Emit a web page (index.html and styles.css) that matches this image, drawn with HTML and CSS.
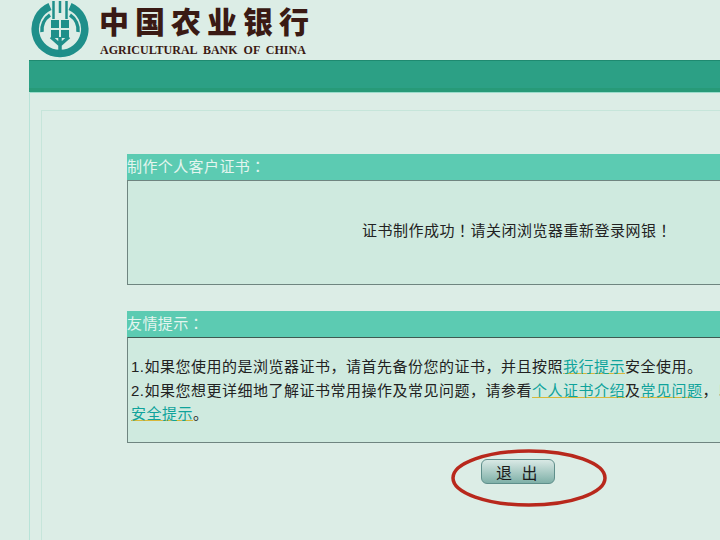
FILE: index.html
```html
<!DOCTYPE html>
<html lang="zh-CN">

<head>
    <meta charset="UTF-8">
    <meta name="viewport" content="width=device-width, initial-scale=1.0">
    <title>中国农业银行</title>
    <link rel="stylesheet" href="styles.css">
</head>

<body>
    <div class="header">
        <svg class="logo" width="58" height="58" viewBox="0 0 58 58">
            <g fill="none" stroke="#1f8f8a">
                <path stroke-width="7.5" d="M19 6.5A24.5 24.5 0 0 0 29 53.5A24.5 24.5 0 0 0 39 6.5" />
                <path stroke-width="3.5" d="M11 32A18 18 0 0 1 19 15" />
                <path stroke-width="3.5" d="M47 32A18 18 0 0 0 39 15" />
                <path stroke-width="2.5" d="M22.5 1V19M35.5 1V19M29 1V13" />
                <path stroke-width="3.5" d="M29 37V56M20 37L29 45L38 37" />
            </g>
            <g fill="#1f8f8a">
                <rect x="20" y="20" width="8" height="8" />
                <rect x="30" y="20" width="8" height="8" />
                <rect x="20" y="30" width="8" height="8" />
                <rect x="30" y="30" width="8" height="8" />
            </g>
        </svg>
        <div class="brand">
            <div class="brand-cn">中国农业银行</div>
            <div class="brand-en">AGRICULTURAL BANK OF CHINA</div>
        </div>
    </div>

    <div class="bar"></div>

    <div class="outer">
        <div class="inner">
            <div class="section">
                <div class="section-title" lang="zh-TW">制作个人客户证书：</div>
                <div class="section-box result" lang="zh-TW">证书制作成功！请关闭浏览器重新登录网银！</div>
            </div>

            <div class="section">
                <div class="section-title" lang="zh-TW">友情提示：</div>
                <div class="section-box tips">
                    1.如果您使用的是浏览器证书，请首先备份您的证书，并且按照<a href="#">我行提示</a>安全使用。<br>
                    2.如果您想更详细地了解证书常用操作及常见问题，请参看<a href="#">个人证书介绍</a>及<a href="#">常见问题</a>，以及<br>
                    <a href="#">安全提示</a>。
                </div>
            </div>

            <div class="actions">
                <button class="exit-btn">退&nbsp;出</button>
                <svg class="circle-mark" width="160" height="60" viewBox="0 0 160 60">
                    <ellipse cx="80" cy="30" rx="76" ry="27" fill="none" stroke="#b8281c" stroke-width="3.5" />
                </svg>
            </div>
        </div>
    </div>
</body>

</html>
```

FILE: styles.css
```css
html,
body {
    height: 100%;
}

body {
    margin: 0;
    padding: 0;
    width: 720px;
    height: 540px;
    overflow: hidden;
    font-family: "Liberation Sans", "Noto Sans CJK SC", sans-serif;
    font-size: 15px;
    color: #222;
    background-color: #dcede6;
}

.header {
    display: flex;
    align-items: flex-start;
    height: 60px;
    padding-left: 31px;
    box-sizing: border-box;
}

.logo {
    flex: none;
}

.brand {
    margin-left: 11px;
    color: #3a1a14;
}

.brand-cn {
    margin-left: -1px;
    font-family: "Noto Sans CJK SC", sans-serif;
    font-size: 30px;
    font-weight: 900;
    line-height: 40px;
    letter-spacing: 6px;
}

.brand-en {
    font-family: "Liberation Serif", serif;
    font-size: 12px;
    font-weight: bold;
    line-height: 14px;
    margin-top: 3px;
    word-spacing: 3px;
}

.bar {
    height: 27px;
    margin-left: 29px;
    background-color: #2ca085;
    border-top: 1px solid #1f8a70;
    border-bottom: 4px solid #279a78;
    box-shadow: 0 1px 0 #9adccb;
}

.outer {
    height: 448px;
    margin-left: 29px;
    padding: 18px 0 0 11px;
    box-sizing: border-box;
    border-left: 1px solid #b8e3d8;
}

.inner {
    height: 100%;
    padding: 43px 0 0 85px;
    box-sizing: border-box;
    border-left: 1px solid #c6e5da;
    border-top: 1px solid #c6e5da;
}

.section {
    width: 776px;
    margin-bottom: 26px;
}

.section-title {
    height: 26px;
    font-family: "Liberation Sans", "Noto Sans CJK TC", sans-serif;
    line-height: 26px;
    letter-spacing: 0.4px;
    color: #e4f5ef;
    background-color: #5ccbb2;
}

.section-box {
    box-sizing: border-box;
    background-color: #cfeadf;
    border: 1px solid #6f8580;
}

.result {
    height: 105px;
    padding-left: 4px;
    font-family: "Liberation Sans", "Noto Sans CJK TC", sans-serif;
    line-height: 100px;
    letter-spacing: 0.5px;
    text-align: center;
}

.tips {
    height: 106px;
    padding: 17px 3px 0;
    line-height: 23.5px;
    letter-spacing: 0.5px;
    white-space: nowrap;
    border-top-color: #3f5a52;
}

.tips a {
    color: #0fa39b;
    text-decoration: underline;
    text-decoration-color: #d8b83a;
}

.actions {
    position: relative;
    margin-top: -10px;
    width: 480px;
    display: flex;
    justify-content: center;
    padding-left: 302px;
    box-sizing: border-box;
}

.exit-btn {
    width: 74px;
    height: 25px;
    padding: 0;
    font-family: inherit;
    font-size: 16px;
    letter-spacing: 2.5px;
    color: #1c1c1c;
    background: linear-gradient(#d9e9e5, #7fb0a8);
    border: 1px solid #5f8f8b;
    border-radius: 6px;
}

.circle-mark {
    position: absolute;
    left: 322px;
    top: -11px;
}
```
